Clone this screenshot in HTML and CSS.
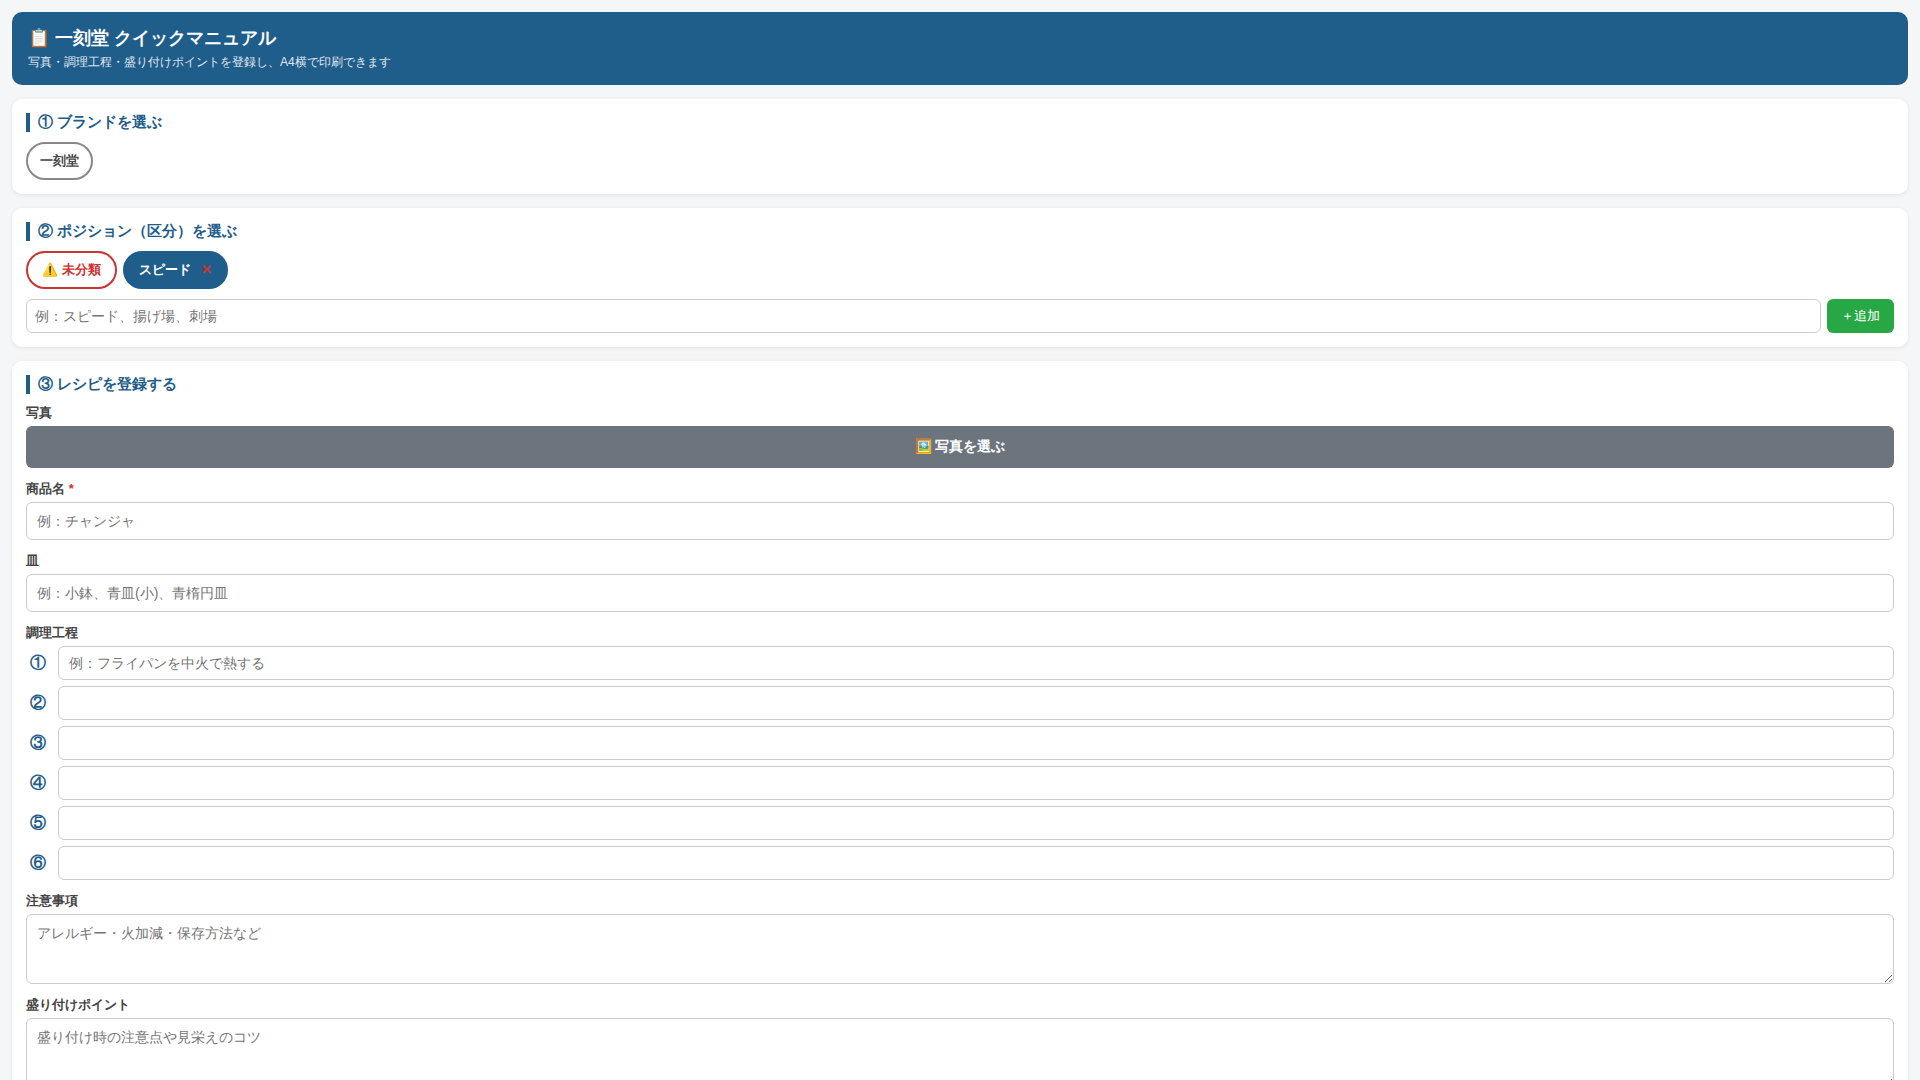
FILE: index.html
```html
<!DOCTYPE html>
<html lang="ja">
<head>
    <meta charset="UTF-8">
    <meta name="viewport" content="width=device-width, initial-scale=1.0">
    <title>一刻堂 クイックマニュアル</title>
    <link rel="stylesheet" href="styles.css">
</head>
<body>
    <header class="header">
        <h1>📋 一刻堂 クイックマニュアル</h1>
        <p>写真・調理工程・盛り付けポイントを登録し、A4横で印刷できます</p>
    </header>

    <section class="card">
        <h2>① ブランドを選ぶ</h2>
        <div class="btn-row">
            <button type="button" class="brand-btn">一刻堂</button>
        </div>
    </section>

    <section class="card">
        <h2>② ポジション（区分）を選ぶ</h2>
        <div class="btn-row">
            <button type="button" class="pos-btn unsorted">⚠️ 未分類</button>
            <button type="button" class="pos-btn active">スピード<span class="del">✕</span></button>
        </div>
        <div class="add-row">
            <input type="text" id="newPosition" aria-label="ポジション" placeholder="例：スピード、揚げ場、刺場">
            <button type="button" class="add-btn">＋追加</button>
        </div>
    </section>

    <section class="card">
        <h2>③ レシピを登録する</h2>
        <form class="recipe-form">
            <div class="field">
                <label for="photoBtn">写真</label>
                <button type="button" id="photoBtn" class="photo-btn">🖼️ 写真を選ぶ</button>
            </div>
            <div class="field">
                <label for="itemName">商品名 <span class="required">*</span></label>
                <input type="text" id="itemName" placeholder="例：チャンジャ">
            </div>
            <div class="field">
                <label for="plate">皿</label>
                <input type="text" id="plate" placeholder="例：小鉢、青皿(小)、青楕円皿">
            </div>
            <div class="field">
                <label for="step1">調理工程</label>
                <div class="steps">
                    <div class="step-row">
                        <label class="step-num" for="step1">①</label>
                        <input type="text" id="step1" placeholder="例：フライパンを中火で熱する">
                    </div>
                    <div class="step-row">
                        <label class="step-num" for="step2">②</label>
                        <input type="text" id="step2">
                    </div>
                    <div class="step-row">
                        <label class="step-num" for="step3">③</label>
                        <input type="text" id="step3">
                    </div>
                    <div class="step-row">
                        <label class="step-num" for="step4">④</label>
                        <input type="text" id="step4">
                    </div>
                    <div class="step-row">
                        <label class="step-num" for="step5">⑤</label>
                        <input type="text" id="step5">
                    </div>
                    <div class="step-row">
                        <label class="step-num" for="step6">⑥</label>
                        <input type="text" id="step6">
                    </div>
                </div>
            </div>
            <div class="field">
                <label for="notes">注意事項</label>
                <textarea id="notes" placeholder="アレルギー・火加減・保存方法など"></textarea>
            </div>
            <div class="field">
                <label for="points">盛り付けポイント</label>
                <textarea id="points" placeholder="盛り付け時の注意点や見栄えのコツ"></textarea>
            </div>
        </form>
    </section>
</body>
</html>
```
FILE: styles.css
```css
* {
    box-sizing: border-box;
}
body {
    font-family: "Liberation Sans", sans-serif;
    background: #f4f6f8;
    color: #333;
    margin: 0;
    padding: 12px;
}
button, input, textarea {
    font-family: inherit;
}
button {
    cursor: pointer;
}
.header {
    background: #1f5d8b;
    color: #fff;
    padding: 14px 16px;
    border-radius: 10px;
    margin-bottom: 14px;
}
.header h1 {
    margin: 0;
    font-size: 18px;
    line-height: 24px;
}
.header p {
    margin: 4px 0 0;
    font-size: 12px;
    line-height: 17px;
    opacity: 0.85;
}
.card {
    background: #fff;
    border-radius: 10px;
    padding: 14px;
    margin-bottom: 14px;
    box-shadow: 0 1px 4px rgba(0, 0, 0, 0.08);
}
.card h2 {
    margin: 0 0 10px;
    padding: 0 0 2px 8px;
    border-left: 4px solid #1f5d8b;
    color: #1f5d8b;
    font-size: 15px;
    line-height: 17px;
}
.btn-row {
    display: flex;
    flex-wrap: wrap;
    gap: 6px;
}
.brand-btn, .pos-btn {
    height: 38px;
    border: 2px solid #888;
    border-radius: 20px;
    background: #fff;
    color: #444;
    font-size: 13px;
    font-weight: bold;
}
.brand-btn {
    padding: 0 12px;
}
.pos-btn {
    padding: 0 14px;
}
.pos-btn.unsorted {
    border-color: #c33;
    color: #c33;
}
.pos-btn.active {
    border-color: #1f5d8b;
    background: #1f5d8b;
    color: #fff;
}
.del {
    margin-left: 10px;
    color: #c33;
}
.add-row {
    display: flex;
    gap: 6px;
    margin-top: 10px;
}
input, textarea {
    display: block;
    width: 100%;
    padding: 0 10px;
    border: 1px solid #ccc;
    border-radius: 6px;
    background: #fff;
    font-size: 14px;
}
input {
    height: 38px;
}
.add-row input {
    flex: 1;
    height: 34px;
    padding: 0 8px;
}
.add-btn {
    padding: 0 14px;
    border: none;
    border-radius: 6px;
    background: #28a745;
    color: #fff;
    font-size: 13px;
}
.recipe-form {
    display: flex;
    flex-direction: column;
    gap: 12px;
}
.field > label {
    display: block;
    margin-bottom: 4px;
    color: #444;
    font-size: 13px;
    font-weight: bold;
    line-height: 18px;
}
.required {
    color: #d32f2f;
}
.photo-btn {
    display: block;
    width: 100%;
    height: 42px;
    border: none;
    border-radius: 6px;
    background: #6c757d;
    color: #fff;
    font-size: 14px;
    font-weight: bold;
}
.steps {
    display: flex;
    flex-direction: column;
    gap: 6px;
}
.step-row {
    display: flex;
    align-items: center;
    gap: 8px;
}
.step-row input {
    flex: 1;
    height: 34px;
}
.step-num {
    width: 24px;
    color: #1f5d8b;
    font-size: 16px;
    font-weight: bold;
    text-align: center;
}
textarea {
    height: 70px;
    padding: 10px;
    resize: vertical;
}
```
